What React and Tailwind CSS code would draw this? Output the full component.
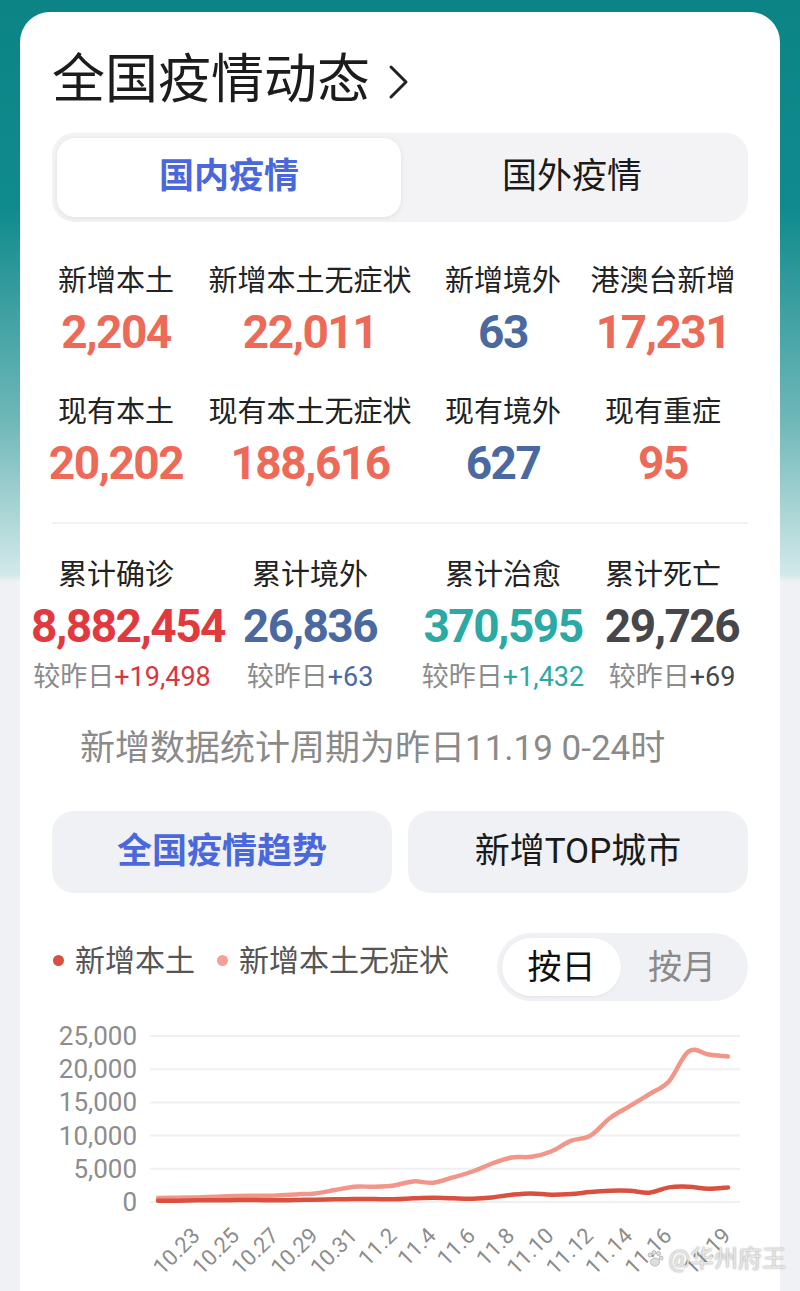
import React from "react";

const pink = [600, 650, 700, 800, 900, 950, 1000, 1150, 1300, 1800, 2300, 2300, 2500, 3100, 2900, 3700, 4600, 5800, 6700, 6800, 7600, 9200, 10000, 12650, 14450, 16250, 18200, 22700, 22200, 21900];
const red = [200, 200, 250, 250, 300, 300, 250, 300, 350, 400, 450, 450, 400, 550, 650, 550, 500, 700, 1100, 1300, 1100, 1200, 1500, 1700, 1700, 1400, 2200, 2300, 2000, 2204];

const row1 = [
  { label: "新增本土", value: "2,204", color: "text-[#ee6a58]" },
  { label: "新增本土无症状", value: "22,011", color: "text-[#ee6a58]" },
  { label: "新增境外", value: "63", color: "text-[#4a69a0]" },
  { label: "港澳台新增", value: "17,231", color: "text-[#ee6a58]" },
];

const row2 = [
  { label: "现有本土", value: "20,202", color: "text-[#ee6a58]" },
  { label: "现有本土无症状", value: "188,616", color: "text-[#ee6a58]" },
  { label: "现有境外", value: "627", color: "text-[#4a69a0]" },
  { label: "现有重症", value: "95", color: "text-[#ee6a58]" },
];

const row3 = [
  { label: "累计确诊", value: "8,882,454", delta: "+19,498", color: "text-[#e0393e]", dcolor: "text-[#d9363e]", numCls: "ml-[24px]", dCls: "ml-[12px]" },
  { label: "累计境外", value: "26,836", delta: "+63", color: "text-[#4a69a0]", dcolor: "text-[#4a69a0]" },
  { label: "累计治愈", value: "370,595", delta: "+1,432", color: "text-[#2aa9a5]", dcolor: "text-[#2aa9a5]" },
  { label: "累计死亡", value: "29,726", delta: "+69", color: "text-[#47474b]", dcolor: "text-[#47474b]", numCls: "ml-[18px]", dCls: "ml-[18px]" },
];

const cols = "grid grid-cols-[128px_260px_126px_194px]";

function StatCell({ item }) {
  return (
    <div className="flex flex-col items-center">
      <div className="h-[36px] leading-[36px] text-[29px] text-[#222] whitespace-nowrap">{item.label}</div>
      <div className={`mt-[8px] h-[50px] leading-[50px] text-[46px] font-bold tracking-[-1.5px] whitespace-nowrap ${item.color} ${item.numCls || ""}`}>
        {item.value}
      </div>
      {item.delta && (
        <div className={`mt-[10px] h-[32px] leading-[32px] text-[27px] text-[#8c8c8c] whitespace-nowrap ${item.dCls || ""}`}>
          较昨日<span className={item.dcolor}>{item.delta}</span>
        </div>
      )}
    </div>
  );
}

const smooth = (pts) => {
  let d = `M${pts[0][0].toFixed(1)},${pts[0][1].toFixed(1)}`;
  for (let i = 0; i < pts.length - 1; i++) {
    const p0 = pts[i - 1] || pts[i];
    const p1 = pts[i];
    const p2 = pts[i + 1];
    const p3 = pts[i + 2] || p2;
    const t = 0.18;
    const c1x = p1[0] + (p2[0] - p0[0]) * t;
    const c1y = p1[1] + (p2[1] - p0[1]) * t;
    const c2x = p2[0] - (p3[0] - p1[0]) * t;
    const c2y = p2[1] - (p3[1] - p1[1]) * t;
    d += ` C${c1x.toFixed(1)},${c1y.toFixed(1)} ${c2x.toFixed(1)},${c2y.toFixed(1)} ${p2[0].toFixed(1)},${p2[1].toFixed(1)}`;
  }
  return d;
};

function TrendChart() {
  const x0 = 106;
  const step = 570 / 29;
  const yOf = (v) => 191 - (v * 166) / 25000;
  const toPts = (arr) => arr.map((v, i) => [x0 + i * step, yOf(v)]);
  const ticks = [25000, 20000, 15000, 10000, 5000, 0];
  const labelIdx = [2, 4, 6, 8, 10, 12, 14, 16, 18, 20, 22, 24, 26, 29];
  const dateOf = (i) => {
    const day = 21 + i;
    return day > 31 ? `11.${day - 31}` : `10.${day}`;
  };

  return (
    <svg width="696" height="281" viewBox="0 0 696 281" className="block mt-[10px]">
      {ticks.map((t) => (
        <g key={t}>
          <line x1="98" x2="688" y1={yOf(t)} y2={yOf(t)} stroke="#f0f0f2" strokeWidth="2" />
          <text x="85" y={yOf(t)} textAnchor="end" dominantBaseline="central" fontSize="26" fill="#8c8c8c" fontFamily="Roboto, sans-serif">
            {t.toLocaleString("en-US")}
          </text>
        </g>
      ))}
      <path d={smooth(toPts(pink))} fill="none" stroke="#f2968a" strokeWidth="4.5" strokeLinecap="round" strokeLinejoin="round" />
      <path d={smooth(toPts(red))} fill="none" stroke="#d9503f" strokeWidth="4.5" strokeLinecap="round" strokeLinejoin="round" />
      {labelIdx.map((i) => (
        <text
          key={i}
          transform={`translate(${(x0 + i * step + 4).toFixed(1)},226) rotate(-45)`}
          textAnchor="end"
          fontSize="22"
          fill="#8c8c8c"
          fontFamily="Roboto, sans-serif"
        >
          {dateOf(i)}
        </text>
      ))}
    </svg>
  );
}

export default function App() {
  return (
    <div className="relative w-[800px] h-[1291px] overflow-hidden [font-family:Roboto,'Noto_Sans_CJK_SC',sans-serif] bg-[linear-gradient(180deg,#0c8486_0px,#108b8d_210px,#6fb7b8_420px,#d3e9ea_575px,#f0f1f4_582px)]">
      <div className="mx-[20px] mt-[12px] h-[1400px] bg-white rounded-[30px] px-[32px] pt-[43px]">
        <div className="flex items-center h-[50px]">
          <span className="text-[53px] leading-[50px] text-[#1c1c1c]">全国疫情动态</span>
          <svg width="24" height="36" viewBox="0 0 24 36" className="ml-[16px] mt-[4px]">
            <polyline points="5,3 20,18 5,33" fill="none" stroke="#222" strokeWidth="3" strokeLinecap="round" strokeLinejoin="round" />
          </svg>
        </div>

        <div className="mt-[28px] h-[89px] rounded-[22px] bg-[#f3f3f5] p-[5px] flex">
          <div className="w-[344px] h-full rounded-[18px] bg-white shadow-[0_1px_5px_rgba(0,0,0,0.08)] flex items-center justify-center text-[35px] font-bold text-[#4a67db]">
            国内疫情
          </div>
          <div className="flex-1 flex items-center justify-center text-[35px] text-[#1a1a1a]">国外疫情</div>
        </div>

        <div className={`${cols} mt-[41px] gap-y-[37px]`}>
          {row1.map((it) => (
            <StatCell key={it.label} item={it} />
          ))}
          {row2.map((it) => (
            <StatCell key={it.label} item={it} />
          ))}
        </div>

        <div className="mt-[34px] h-[2px] bg-[#f2f2f3]" />

        <div className={`${cols} mt-[33px]`}>
          {row3.map((it) => (
            <StatCell key={it.label} item={it} />
          ))}
        </div>

        <div className="mt-[34px] pl-[28px] h-[44px] leading-[44px] text-[35px] text-[#8a8a8a] whitespace-nowrap">
          新增数据统计周期为昨日11.19 0-24时
        </div>

        <div className="mt-[40px] flex gap-[16px]">
          <div className="flex-1 h-[82px] rounded-[22px] bg-[#f0f1f4] flex items-center justify-center text-[35px] font-bold text-[#4a67db]">
            全国疫情趋势
          </div>
          <div className="flex-1 h-[82px] rounded-[22px] bg-[#f0f1f4] flex items-center justify-center text-[35px] text-[#1a1a1a]">
            新增TOP城市
          </div>
        </div>

        <div className="mt-[40px] h-[68px] flex items-center justify-between">
          <div className="flex items-center text-[30px] text-[#555] -mt-[14px] pl-[1px]">
            <span className="w-[11px] h-[11px] rounded-full bg-[#d9503f] mr-[11px]" />
            <span>新增本土</span>
            <span className="w-[11px] h-[11px] rounded-full bg-[#f4a199] ml-[22px] mr-[11px]" />
            <span>新增本土无症状</span>
          </div>
          <div className="w-[251px] h-full rounded-full bg-[#f0f1f4] p-[5px] flex">
            <div className="w-[119px] h-full rounded-full bg-white shadow-[0_1px_3px_rgba(0,0,0,0.06)] flex items-center justify-center text-[34px] text-[#111]">
              按日
            </div>
            <div className="flex-1 flex items-center justify-center text-[34px] text-[#8a8a8a]">按月</div>
          </div>
        </div>

        <TrendChart />
      </div>

      <div className="absolute right-[14px] bottom-[14px] flex items-center text-[24px] text-[#e6e6e6] [text-shadow:0_0_2px_rgba(0,0,0,0.45)]">
        <svg width="20" height="20" viewBox="0 0 20 20" className="mr-[3px]">
          <g fill="#dedede" stroke="#9a9a9a" strokeWidth="0.6">
            <circle cx="5" cy="6" r="2" />
            <circle cx="9" cy="3.5" r="2" />
            <circle cx="13.5" cy="4.5" r="2" />
            <circle cx="16" cy="9" r="2" />
            <ellipse cx="10" cy="13" rx="4.5" ry="4" />
          </g>
        </svg>
        @华州府王
      </div>
    </div>
  );
}
